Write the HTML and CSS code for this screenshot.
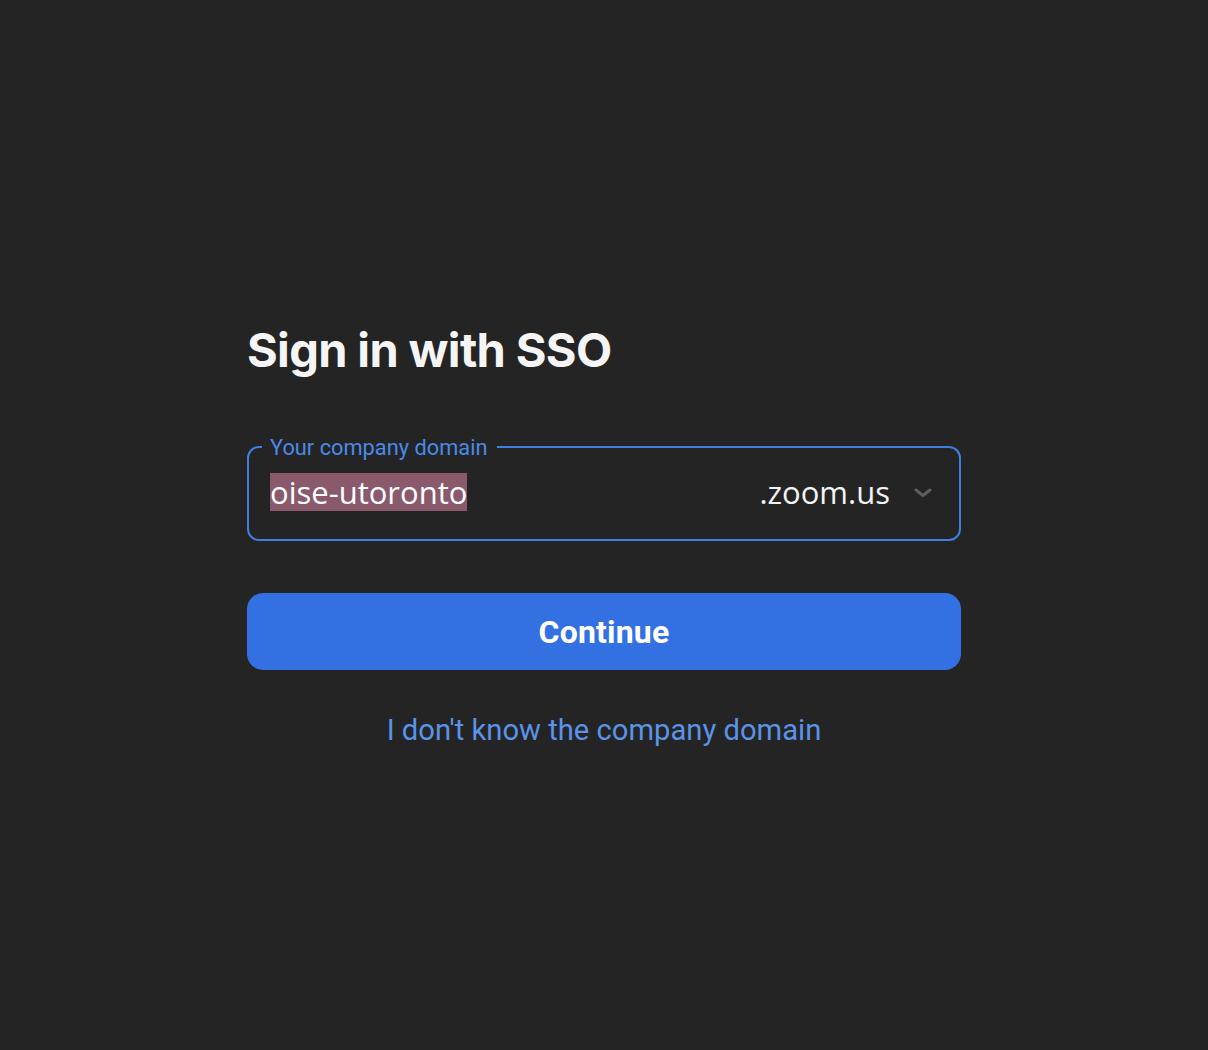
FILE: index.html
```html
<!DOCTYPE html>
<html lang="en">
<head>
<meta charset="utf-8">
<title>Sign in with SSO</title>
<link rel="stylesheet" href="styles.css">
</head>
<body>
<main class="page">
  <section class="card">
    <h1 class="title">Sign in with SSO</h1>
    <div class="field">
      <span class="label">Your company domain</span>
      <span class="value"><span class="sel">oise-utoronto</span></span>
      <span class="suffix">.zoom.us</span>
      <svg class="chevron" width="18" height="10" viewBox="0 0 18 10" aria-hidden="true">
        <path d="M2 2 L9 7.5 L16 2" fill="none" stroke="#5e5e5e" stroke-width="3" stroke-linecap="round" stroke-linejoin="round"/>
      </svg>
    </div>
    <button class="btn" type="button">Continue</button>
    <a class="link" href="#">I don't know the company domain</a>
  </section>
</main>
</body>
</html>
```

FILE: styles.css
```css
html, body {
  margin: 0;
  padding: 0;
  background: #242424;
}
body {
  font-family: "Open Sans", "Liberation Sans", sans-serif;
  color: #f4f4f4;
  width: 1208px;
  height: 1050px;
  overflow: hidden;
}
.page {
  display: flex;
  justify-content: center;
  padding-top: 318px;
}
.card {
  width: 714px;
  display: flex;
  flex-direction: column;
}
.title {
  margin: 0;
  font-family: "Inter", sans-serif;
  font-weight: 700;
  font-size: 47px;
  line-height: 64px;
  letter-spacing: -0.65px;
  color: #f5f5f5;
}
.field {
  position: relative;
  margin-top: 64px;
  height: 95px;
  box-sizing: border-box;
  border: 2px solid #3f7fe0;
  border-radius: 12px;
  display: flex;
  align-items: center;
  padding: 0 27px 3px 21px;
}
.label {
  position: absolute;
  top: -12px;
  left: 13px;
  padding: 0 10px 0 8px;
  background: #242424;
  font-family: "Roboto", sans-serif;
  font-size: 21.8px;
  line-height: 24px;
  color: #4a8ae8;
}
.value {
  flex: 1;
  font-size: 31px;
  line-height: 38px;
  color: #ffffff;
  display: flex;
}
.sel {
  background: #8a5a6c;
}
.suffix {
  font-size: 31px;
  line-height: 38px;
  color: #f4f4f4;
}
.chevron {
  margin-left: 24px;
  margin-top: 1px;
}
.btn {
  margin-top: 52px;
  height: 77px;
  border: none;
  border-radius: 16px;
  background: #3371e3;
  color: #ffffff;
  font-family: "Roboto", sans-serif;
  font-weight: 700;
  font-size: 32px;
  letter-spacing: 0.2px;
  padding: 0;
  cursor: pointer;
}
.link {
  align-self: center;
  margin-top: 40px;
  font-family: "Roboto", sans-serif;
  font-size: 29.2px;
  line-height: 40px;
  color: #5a93e8;
  text-decoration: none;
}
```
